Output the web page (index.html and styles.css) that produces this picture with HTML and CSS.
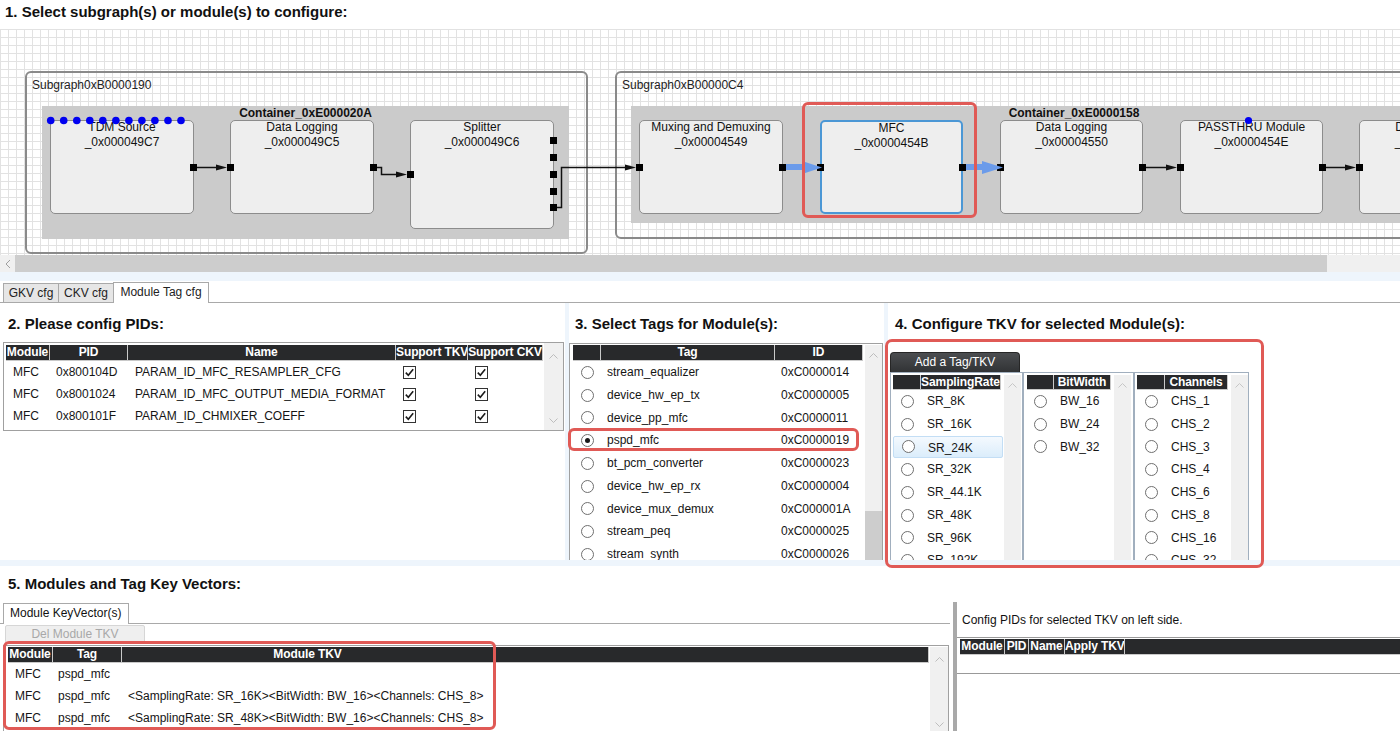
FILE: index.html
```html
<!DOCTYPE html>
<html>
<head>
<meta charset="utf-8">
<title>Module Tag cfg</title>
<link rel="stylesheet" href="styles.css">
</head>
<body>
<div class="page">
  <h1 class="title">1. Select subgraph(s) or module(s) to configure:</h1>

  <div class="canvas">
    <div class="subgraph sg1"><span class="sg-label">Subgraph0xB0000190</span></div>
    <div class="container ct1"><span class="ct-label">Container_0xE000020A</span></div>
    <div class="module m-tdm"><span class="mlabel">TDM Source<br>_0x000049C7</span></div>
    <div class="module m-dl1"><span class="mlabel">Data Logging<br>_0x000049C5</span></div>
    <div class="module m-split"><span class="mlabel">Splitter<br>_0x000049C6</span></div>

    <div class="subgraph sg2"><span class="sg-label">Subgraph0xB00000C4</span></div>
    <div class="container ct2"><span class="ct-label">Container_0xE0000158</span></div>
    <div class="module m-mux"><span class="mlabel">Muxing and Demuxing<br>_0x00004549</span></div>
    <div class="module m-mfc"><span class="mlabel">MFC<br>_0x0000454B</span></div>
    <div class="module m-dl2"><span class="mlabel">Data Logging<br>_0x00004550</span></div>
    <div class="module m-pass"><span class="mlabel">PASSTHRU Module<br>_0x0000454E</span></div>
    <div class="module m-next"><span class="mlabel">Data Logging<br>_0x00004551</span></div>

    <svg class="edges" width="1400" height="226" viewBox="0 0 1400 226">
      <g fill="none" stroke="#111" stroke-width="1.5">
        <path d="M197 138.5 H218"/>
        <path d="M377 138.5 H381.5 V145.5 H398"/>
        <path d="M557 178.5 H561.5 V138.5 H627"/>
        <path d="M1146 138.5 H1167"/>
        <path d="M1326 138.5 H1347"/>
      </g>
      <g fill="#111">
        <polygon points="216,135.5 227,138.5 216,141.5"/>
        <polygon points="396,142.5 407,145.5 396,148.5"/>
        <polygon points="625,135.5 636,138.5 625,141.5"/>
        <polygon points="1166,135.5 1177,138.5 1166,141.5"/>
        <polygon points="1345,135.5 1356,138.5 1345,141.5"/>
      </g>
      <g fill="#000">
        <rect x="190" y="135" width="7" height="7"/>
        <rect x="227" y="135" width="7" height="7"/>
        <rect x="370" y="135" width="7" height="7"/>
        <rect x="407" y="142" width="7" height="7"/>
        <rect x="550" y="108" width="7" height="7"/>
        <rect x="550" y="125" width="7" height="7"/>
        <rect x="550" y="142" width="7" height="7"/>
        <rect x="550" y="159" width="7" height="7"/>
        <rect x="550" y="175" width="7" height="7"/>
        <rect x="636" y="135" width="7" height="7"/>
        <rect x="779" y="135" width="7" height="7"/>
        <rect x="817" y="135" width="7" height="7"/>
        <rect x="959" y="135" width="7" height="7"/>
        <rect x="997" y="135" width="7" height="7"/>
        <rect x="1139" y="135" width="7" height="7"/>
        <rect x="1177" y="135" width="7" height="7"/>
        <rect x="1319" y="135" width="7" height="7"/>
        <rect x="1356" y="135" width="7" height="7"/>
      </g>
      <g fill="#6b9bea">
        <rect x="786" y="135" width="18" height="6"/>
        <polygon points="802,132 822,138.5 802,145"/>
        <rect x="966" y="135" width="18" height="6"/>
        <polygon points="982,132 1003,138.5 982,145"/>
      </g>
      <g fill="#0000f0">
        <circle cx="50.7" cy="91.5" r="3.8"/>
        <circle cx="63.7" cy="91.5" r="3.8"/>
        <circle cx="76.8" cy="91.5" r="3.8"/>
        <circle cx="89.8" cy="91.5" r="3.8"/>
        <circle cx="102.8" cy="91.5" r="3.8"/>
        <circle cx="115.9" cy="91.5" r="3.8"/>
        <circle cx="128.9" cy="91.5" r="3.8"/>
        <circle cx="141.9" cy="91.5" r="3.8"/>
        <circle cx="154.9" cy="91.5" r="3.8"/>
        <circle cx="168" cy="91.5" r="3.8"/>
        <circle cx="181" cy="91.5" r="3.8"/>
        <circle cx="1248.5" cy="91.5" r="3.6"/>
      </g>
    </svg>
  </div>

  <div class="hscroll">
    <div class="harrow"><svg width="6" height="10" viewBox="0 0 6 10"><path d="M5 1 L1 5 L5 9" fill="none" stroke="#a0a0a0"/></svg></div>
    <div class="hthumb"></div>
  </div>
  <div class="band"></div>

  <div class="tabbar">
    <div class="tab t-gkv">GKV cfg</div>
    <div class="tab t-ckv">CKV cfg</div>
    <div class="tab t-mtc active">Module Tag cfg</div>
  </div>

  <div class="panels">
    <section class="panel p2">
      <h2 class="sec">2. Please config PIDs:</h2>
      <div class="tbox t2">
        <div class="tarea">
          <div class="thead cols2">
            <div class="th">Module</div><div class="th">PID</div><div class="th">Name</div><div class="th">Support TKV</div><div class="th">Support CKV</div>
          </div>
          <div class="tr cols2">
            <div class="td">MFC</div><div class="td">0x800104D</div><div class="td">PARAM_ID_MFC_RESAMPLER_CFG</div>
            <div class="td cb"><svg class="chk" width="13" height="13" viewBox="0 0 13 13"><rect x="0.5" y="0.5" width="12" height="12" fill="#fff" stroke="#333"/><path d="M2.8 6.6 L5.3 9.2 L10.2 3.2" fill="none" stroke="#1a1a1a" stroke-width="1.6"/></svg></div>
            <div class="td cb"><svg class="chk" width="13" height="13" viewBox="0 0 13 13"><rect x="0.5" y="0.5" width="12" height="12" fill="#fff" stroke="#333"/><path d="M2.8 6.6 L5.3 9.2 L10.2 3.2" fill="none" stroke="#1a1a1a" stroke-width="1.6"/></svg></div>
          </div>
          <div class="tr cols2">
            <div class="td">MFC</div><div class="td">0x8001024</div><div class="td">PARAM_ID_MFC_OUTPUT_MEDIA_FORMAT</div>
            <div class="td cb"><svg class="chk" width="13" height="13" viewBox="0 0 13 13"><rect x="0.5" y="0.5" width="12" height="12" fill="#fff" stroke="#333"/><path d="M2.8 6.6 L5.3 9.2 L10.2 3.2" fill="none" stroke="#1a1a1a" stroke-width="1.6"/></svg></div>
            <div class="td cb"><svg class="chk" width="13" height="13" viewBox="0 0 13 13"><rect x="0.5" y="0.5" width="12" height="12" fill="#fff" stroke="#333"/><path d="M2.8 6.6 L5.3 9.2 L10.2 3.2" fill="none" stroke="#1a1a1a" stroke-width="1.6"/></svg></div>
          </div>
          <div class="tr cols2">
            <div class="td">MFC</div><div class="td">0x800101F</div><div class="td">PARAM_ID_CHMIXER_COEFF</div>
            <div class="td cb"><svg class="chk" width="13" height="13" viewBox="0 0 13 13"><rect x="0.5" y="0.5" width="12" height="12" fill="#fff" stroke="#333"/><path d="M2.8 6.6 L5.3 9.2 L10.2 3.2" fill="none" stroke="#1a1a1a" stroke-width="1.6"/></svg></div>
            <div class="td cb"><svg class="chk" width="13" height="13" viewBox="0 0 13 13"><rect x="0.5" y="0.5" width="12" height="12" fill="#fff" stroke="#333"/><path d="M2.8 6.6 L5.3 9.2 L10.2 3.2" fill="none" stroke="#1a1a1a" stroke-width="1.6"/></svg></div>
          </div>
        </div>
        <div class="vscroll vs2">
          <svg class="chev" width="9" height="5" viewBox="0 0 9 5"><path d="M0.5 4.5 L4.5 0.5 L8.5 4.5" fill="none" stroke="#bdbdbd"/></svg>
          <svg class="chev" width="9" height="5" viewBox="0 0 9 5"><path d="M0.5 0.5 L4.5 4.5 L8.5 0.5" fill="none" stroke="#bdbdbd"/></svg>
        </div>
      </div>
    </section>

    <section class="panel p3">
      <h2 class="sec">3. Select Tags for Module(s):</h2>
      <div class="tbox t3">
        <div class="tarea">
          <div class="thead cols3"><div class="th"></div><div class="th">Tag</div><div class="th">ID</div></div>
          <div class="tr tr-r cols3"><div class="td rc"><span class="radio"></span></div><div class="td">stream_equalizer</div><div class="td">0xC0000014</div></div>
          <div class="tr tr-r cols3"><div class="td rc"><span class="radio"></span></div><div class="td">device_hw_ep_tx</div><div class="td">0xC0000005</div></div>
          <div class="tr tr-r cols3"><div class="td rc"><span class="radio"></span></div><div class="td">device_pp_mfc</div><div class="td">0xC0000011</div></div>
          <div class="tr tr-r cols3"><div class="td rc"><span class="radio on"></span></div><div class="td">pspd_mfc</div><div class="td">0xC0000019</div></div>
          <div class="tr tr-r cols3"><div class="td rc"><span class="radio"></span></div><div class="td">bt_pcm_converter</div><div class="td">0xC0000023</div></div>
          <div class="tr tr-r cols3"><div class="td rc"><span class="radio"></span></div><div class="td">device_hw_ep_rx</div><div class="td">0xC0000004</div></div>
          <div class="tr tr-r cols3"><div class="td rc"><span class="radio"></span></div><div class="td">device_mux_demux</div><div class="td">0xC000001A</div></div>
          <div class="tr tr-r cols3"><div class="td rc"><span class="radio"></span></div><div class="td">stream_peq</div><div class="td">0xC0000025</div></div>
          <div class="tr tr-r cols3"><div class="td rc"><span class="radio"></span></div><div class="td">stream_synth</div><div class="td">0xC0000026</div></div>
        </div>
        <div class="vscroll vs3">
          <svg class="chev" width="9" height="5" viewBox="0 0 9 5"><path d="M0.5 4.5 L4.5 0.5 L8.5 4.5" fill="none" stroke="#bdbdbd"/></svg>
          <div class="thumb"></div>
        </div>
      </div>
    </section>

    <section class="panel p4">
      <h2 class="sec">4. Configure TKV for selected Module(s):</h2>
      <div class="btn-add">Add a Tag/TKV</div>
      <div class="lists">
        <div class="list l-sr">
          <div class="larea">
            <div class="thead lh colsSR"><div class="th"></div><div class="th">SamplingRate</div></div>
            <div class="tr tr-r colsSR"><div class="td rc"><span class="radio"></span></div><div class="td">SR_8K</div></div>
            <div class="tr tr-r colsSR"><div class="td rc"><span class="radio"></span></div><div class="td">SR_16K</div></div>
            <div class="tr tr-r colsSR hl"><div class="td rc"><span class="radio"></span></div><div class="td">SR_24K</div></div>
            <div class="tr tr-r colsSR"><div class="td rc"><span class="radio"></span></div><div class="td">SR_32K</div></div>
            <div class="tr tr-r colsSR"><div class="td rc"><span class="radio"></span></div><div class="td">SR_44.1K</div></div>
            <div class="tr tr-r colsSR"><div class="td rc"><span class="radio"></span></div><div class="td">SR_48K</div></div>
            <div class="tr tr-r colsSR"><div class="td rc"><span class="radio"></span></div><div class="td">SR_96K</div></div>
            <div class="tr tr-r colsSR"><div class="td rc"><span class="radio"></span></div><div class="td">SR_192K</div></div>
          </div>
          <div class="vscroll vsl"><svg class="chev" width="9" height="5" viewBox="0 0 9 5"><path d="M0.5 4.5 L4.5 0.5 L8.5 4.5" fill="none" stroke="#c6c6c6"/></svg></div>
        </div>
        <div class="list l-bw">
          <div class="larea">
            <div class="thead lh colsBW"><div class="th"></div><div class="th">BitWidth</div></div>
            <div class="tr tr-r colsBW"><div class="td rc"><span class="radio"></span></div><div class="td">BW_16</div></div>
            <div class="tr tr-r colsBW"><div class="td rc"><span class="radio"></span></div><div class="td">BW_24</div></div>
            <div class="tr tr-r colsBW"><div class="td rc"><span class="radio"></span></div><div class="td">BW_32</div></div>
          </div>
          <div class="vscroll vsl"><svg class="chev" width="9" height="5" viewBox="0 0 9 5"><path d="M0.5 4.5 L4.5 0.5 L8.5 4.5" fill="none" stroke="#c6c6c6"/></svg></div>
        </div>
        <div class="list l-ch">
          <div class="larea">
            <div class="thead lh colsCH"><div class="th"></div><div class="th">Channels</div></div>
            <div class="tr tr-r colsCH"><div class="td rc"><span class="radio"></span></div><div class="td">CHS_1</div></div>
            <div class="tr tr-r colsCH"><div class="td rc"><span class="radio"></span></div><div class="td">CHS_2</div></div>
            <div class="tr tr-r colsCH"><div class="td rc"><span class="radio"></span></div><div class="td">CHS_3</div></div>
            <div class="tr tr-r colsCH"><div class="td rc"><span class="radio"></span></div><div class="td">CHS_4</div></div>
            <div class="tr tr-r colsCH"><div class="td rc"><span class="radio"></span></div><div class="td">CHS_6</div></div>
            <div class="tr tr-r colsCH"><div class="td rc"><span class="radio"></span></div><div class="td">CHS_8</div></div>
            <div class="tr tr-r colsCH"><div class="td rc"><span class="radio"></span></div><div class="td">CHS_16</div></div>
            <div class="tr tr-r colsCH"><div class="td rc"><span class="radio"></span></div><div class="td">CHS_32</div></div>
          </div>
          <div class="vscroll vsl"><svg class="chev" width="9" height="5" viewBox="0 0 9 5"><path d="M0.5 4.5 L4.5 0.5 L8.5 4.5" fill="none" stroke="#c6c6c6"/></svg></div>
        </div>
      </div>
    </section>
  </div>

  <div class="band2"></div>

  <h2 class="sec sec5">5. Modules and Tag Key Vectors:</h2>
  <div class="bottom-row">
    <div class="kv">
      <div class="kv-tabs"><div class="kv-tab">Module KeyVector(s)</div></div>
      <div class="btn-del">Del Module TKV</div>
      <div class="tbox t5">
        <div class="tarea">
          <div class="thead cols5"><div class="th">Module</div><div class="th">Tag</div><div class="th">Module TKV</div><div class="th"></div></div>
          <div class="tr cols5"><div class="td">MFC</div><div class="td tg">pspd_mfc</div><div class="td"></div><div class="td"></div></div>
          <div class="tr cols5"><div class="td">MFC</div><div class="td tg">pspd_mfc</div><div class="td">&lt;SamplingRate: SR_16K&gt;&lt;BitWidth: BW_16&gt;&lt;Channels: CHS_8&gt;</div><div class="td"></div></div>
          <div class="tr cols5"><div class="td">MFC</div><div class="td tg">pspd_mfc</div><div class="td">&lt;SamplingRate: SR_48K&gt;&lt;BitWidth: BW_16&gt;&lt;Channels: CHS_8&gt;</div><div class="td"></div></div>
        </div>
        <div class="vscroll vs5">
          <svg class="chev" width="9" height="5" viewBox="0 0 9 5"><path d="M0.5 4.5 L4.5 0.5 L8.5 4.5" fill="none" stroke="#bdbdbd"/></svg>
          <svg class="chev" width="9" height="5" viewBox="0 0 9 5"><path d="M0.5 0.5 L4.5 4.5 L8.5 0.5" fill="none" stroke="#bdbdbd"/></svg>
        </div>
      </div>
    </div>
    <div class="split"></div>
    <div class="cfg">
      <div class="cfg-text">Config PIDs for selected TKV on left side.</div>
      <div class="cfg-table">
        <div class="thead colsR"><div class="th">Module</div><div class="th">PID</div><div class="th">Name</div><div class="th">Apply TKV</div><div class="th th-fill"></div></div>
      </div>
    </div>
  </div>

  <div class="anno anno-mfc"></div>
  <div class="anno anno-tag"></div>
  <div class="anno anno-tkv"></div>
  <div class="anno anno-kv"></div>
</div>
</body>
</html>
```

FILE: styles.css
```css
* { box-sizing: border-box; }

html, body {
  margin: 0;
  padding: 0;
  overflow: hidden;
  background: #fff;
}

body {
  font-family: "Liberation Sans", Arial, sans-serif;
  font-size: 12px;
  color: #111;
}

.page {
  position: relative;
  width: 1400px;
  height: 731px;
  overflow: hidden;
  display: flex;
  flex-direction: column;
}

.page > * { flex: none; }

.title {
  margin: 0;
  height: 29px;
  padding: 3px 0 0 5px;
  font-size: 15px;
  line-height: 17px;
  font-weight: bold;
  color: #111;
}

/* ---------- diagram canvas ---------- */
.canvas {
  position: relative;
  height: 226px;
  overflow: hidden;
  background-color: #fff;
  background-image:
    linear-gradient(to bottom, #e2e2e2 1px, transparent 1px),
    linear-gradient(to right, #e2e2e2 1px, transparent 1px);
  background-size: 8px 8px;
}

.subgraph {
  position: absolute;
  border: 2px solid #8a8a8a;
  border-radius: 6px;
}
.sg1 { left: 25px; top: 42px; width: 563px; height: 183px; }
.sg2 { left: 615px; top: 42px; width: 920px; height: 168px; }

.sg-label {
  position: absolute;
  left: 5px;
  top: 5px;
  line-height: 14px;
  color: #222;
  white-space: nowrap;
}

.container {
  position: absolute;
  background: #cbcbcb;
}
.ct1 { left: 42px; top: 77px; width: 527px; height: 133px; }
.ct2 { left: 631px; top: 77px; width: 886px; height: 117px; }

.ct-label {
  position: absolute;
  left: 0;
  right: 0;
  top: 0;
  text-align: center;
  font-weight: bold;
  line-height: 14px;
  color: #111;
}

.module {
  position: absolute;
  top: 91px;
  width: 144px;
  height: 94px;
  background: #eeeeee;
  border: 1px solid #8c8c8c;
  border-radius: 5px;
  text-align: center;
  line-height: 15px;
  color: #111;
  white-space: nowrap;
}
.mlabel { display: block; margin-top: -1px; }
.m-tdm { left: 50px; }
.m-dl1 { left: 230px; }
.m-split { left: 410px; height: 109px; }
.m-mux { left: 639px; width: 144px; }
.m-mfc { left: 820px; width: 143px; border: 2px solid #4b97d5; }
.m-mfc .mlabel { margin-top: -1px; }
.m-dl2 { left: 1000px; width: 143px; }
.m-pass { left: 1180px; width: 143px; }
.m-next { left: 1359px; width: 144px; }

.edges {
  position: absolute;
  left: 0;
  top: 0;
}

/* ---------- horizontal scrollbar ---------- */
.hscroll {
  height: 17px;
  display: flex;
  background: #f0f0f0;
}
.harrow {
  width: 15px;
  display: flex;
  align-items: center;
  justify-content: center;
}
.hthumb {
  width: 1312px;
  background: #cdcdcd;
}

.band {
  height: 9px;
  background: #eef5fc;
}

/* ---------- tabs ---------- */
.tabbar {
  height: 22px;
  border-bottom: 1px solid #a9a9a9;
  display: flex;
  align-items: flex-end;
  padding-left: 3px;
}
.tab {
  height: 19px;
  border: 1px solid #a9a9a9;
  border-bottom: none;
  background: #e6e6e6;
  line-height: 18px;
  text-align: center;
  color: #222;
  margin-right: -1px;
  white-space: nowrap;
}
.t-gkv { width: 56px; }
.t-ckv { width: 56px; }
.t-mtc { width: 96px; }
.tab.active {
  position: relative;
  height: 21px;
  margin-bottom: -1px;
  background: #fff;
}

/* ---------- panels ---------- */
.panels {
  height: 257px;
  display: flex;
  gap: 4px;
  background: #eef5fc;
}
.panel {
  background: #fff;
  overflow: hidden;
}
.p2 { width: 565px; }
.p3 { width: 315px; }
.p4 { flex: 1; }

.sec {
  margin: 12px 0 0 8px;
  font-size: 15px;
  line-height: 17px;
  font-weight: bold;
  color: #111;
}
.p3 .sec { margin-left: 6px; }
.p4 .sec { margin-left: 7px; }

.tbox {
  border: 1px solid #a0a0a0;
  display: flex;
}

.thead { display: grid; height: 16px; }
.th {
  background: #28292b;
  color: #fff;
  font-weight: bold;
  text-align: center;
  line-height: 15px;
  border-right: 1px solid #c9c9c9;
  border-bottom: 1px solid #c9c9c9;
  white-space: nowrap;
  overflow: hidden;
  letter-spacing: -0.1px;
}
.tr {
  display: grid;
  height: 22px;
  line-height: 22px;
  color: #151515;
}
.tr-r { height: 22.75px; line-height: 22.75px; }
.td {
  padding-left: 7px;
  white-space: nowrap;
  overflow: hidden;
}
.td.cb {
  display: flex;
  align-items: center;
}
.chk { display: block; }

.td.rc {
  padding-left: 0;
  display: flex;
  align-items: center;
  justify-content: center;
}
.radio {
  display: block;
  width: 13px;
  height: 13px;
  border: 1px solid #6f6f6f;
  border-radius: 50%;
  background: #fff;
  position: relative;
}
.radio.on::after {
  content: "";
  position: absolute;
  left: 3px;
  top: 3px;
  width: 5px;
  height: 5px;
  border-radius: 50%;
  background: #1a1a1a;
}

.vscroll {
  background: #f0f0f0;
  display: flex;
  flex-direction: column;
  align-items: center;
}
.chev { display: block; flex: none; }

/* section 2 */
.t2 {
  margin: 10px 0 0 3px;
  width: 561px;
  height: 89px;
}
.t2 .tarea { width: 540px; padding: 2px 0 0 2px; }
.cols2 { grid-template-columns: 44px 78px 268px 72px 75px; }
.cols2 .td:nth-child(2) { padding-left: 6px; }
.vs2 {
  width: 19px;
  justify-content: space-between;
  padding: 11px 0 7px;
}

/* section 3 */
.t3 {
  margin: 11px 0 0 0;
  width: 314px;
  height: 240px;
  padding: 1px 0 0 3px;
  gap: 2px;
}
.t3 .tarea { width: 290px; }
.cols3 { grid-template-columns: 28px 174px 88px; }
.cols3 .td:nth-child(2), .cols3 .td:nth-child(3) { padding-left: 6px; }
.vs3 { width: 17px; padding-top: 8px; }
.thumb {
  align-self: stretch;
  margin-top: 153px;
  flex: 1;
  background: #cdcdcd;
}

/* section 4 */
.btn-add {
  margin: 20px 0 0 2px;
  width: 130px;
  height: 20px;
  border: 1px solid #262626;
  border-bottom: none;
  border-radius: 4px 4px 0 0;
  background: linear-gradient(#4b4d50, #313335);
  color: #fff;
  text-align: center;
  line-height: 19px;
}
.lists {
  display: flex;
  margin-left: 2px;
}
.list {
  border: 1px solid #a1afbe;
  height: 200px;
  display: flex;
  justify-content: space-between;
  padding-top: 2px;
}
.l-sr { width: 133px; padding-left: 2px; padding-right: 1px; }
.l-bw { width: 111px; padding-left: 3px; padding-right: 2px; }
.l-ch { width: 115px; padding-left: 2px; padding-right: 0; }
.thead.lh { height: 15px; }
.thead.lh .th { line-height: 14px; }
.colsSR { grid-template-columns: 28px 80px; }
.colsBW { grid-template-columns: 27px 57px; }
.colsCH { grid-template-columns: 28px 63px; }
.larea .td:nth-child(2) { padding-left: 6px; }
.tr.hl {
  background: linear-gradient(#f4f9fe, #dbedfb);
  border: 1px solid #c3def5;
  border-radius: 2px;
}
.vsl { width: 17px; padding-top: 8px; }

/* ---------- bottom ---------- */
.band2 {
  height: 6px;
  background: #eef5fc;
}
.sec.sec5 { margin: 9px 0 0 8px; }

.bottom-row {
  margin-top: 10px;
  display: flex;
  flex: 1;
  min-height: 0;
}
.kv { width: 950px; flex: none; }
.kv-tabs {
  height: 22px;
  border-bottom: 1px solid #a9a9a9;
  display: flex;
  align-items: flex-start;
  padding-left: 3px;
}
.kv-tab {
  position: relative;
  margin-top: 1px;
  height: 21px;
  width: 126px;
  border: 1px solid #a9a9a9;
  border-bottom: none;
  background: #fff;
  line-height: 18px;
  padding-left: 6px;
  color: #111;
  white-space: nowrap;
}
.btn-del {
  margin: 1px 0 0 5px;
  width: 140px;
  height: 19px;
  border: 1px solid #d6d6d6;
  border-radius: 2px;
  background: #efefef;
  color: #a8a8a8;
  text-align: center;
  line-height: 17px;
}
.t5 {
  margin: 1px 0 0 3px;
  width: 946px;
  height: 100px;
  padding: 1px 0 0 4px;
  gap: 1px;
}
.t5 .tarea { width: 921px; }
.cols5 { grid-template-columns: 45px 69px 372px 435px; }
.cols5 .td.tg { padding-left: 5px; }
.cols5 .td:nth-child(3) { padding-left: 6px; }
.vs5 {
  width: 18px;
  padding-top: 10px;
  gap: 60px;
}

.split {
  width: 4px;
  margin-left: 3px;
  background: #a9a9a9;
  flex: none;
}
.cfg {
  flex: 1;
  padding-top: 10px;
}
.cfg-text {
  padding-left: 5px;
  line-height: 16px;
  color: #111;
  white-space: nowrap;
}
.cfg-table {
  margin-top: 9px;
  height: 37px;
  border-top: 1px solid #999;
  border-bottom: 1px solid #999;
  padding: 1px 0 0 3px;
}
.colsR { grid-template-columns: 45px 24px 36px 60px 1fr; }
.th-fill { border-right: none; }

/* ---------- annotation overlays ---------- */
.anno {
  position: absolute;
  border: 3px solid #e05a56;
  border-radius: 6px;
  pointer-events: none;
}
.anno-mfc { left: 802px; top: 102px; width: 175px; height: 116px; }
.anno-tag { left: 568px; top: 428px; width: 291px; height: 23px; }
.anno-tkv { left: 885px; top: 339px; width: 379px; height: 229px; border-radius: 7px; }
.anno-kv { left: 3px; top: 641px; width: 493px; height: 89px; }
```
